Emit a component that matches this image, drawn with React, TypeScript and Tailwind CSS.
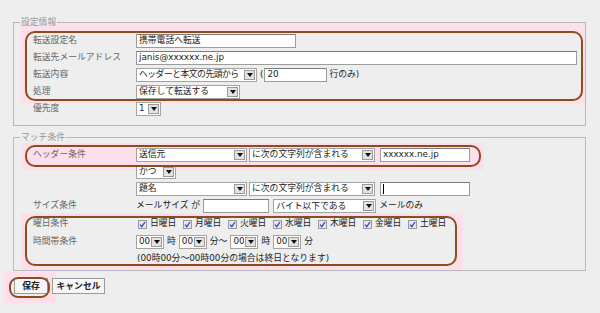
import type { ReactNode } from "react";

function Arrow() {
  return (
    <span className="m-[1px] flex w-[11px] shrink-0 items-center justify-center border border-[#9a9a9a] bg-[#e2e2e2]">
      <svg width="6" height="4" viewBox="0 0 6 4" aria-hidden>
        <polygon points="0,0 6,0 3,4" fill="#111" />
      </svg>
    </span>
  );
}

function Sel({ className, children }: { className: string; children: ReactNode }) {
  return (
    <div className={`flex h-[14px] items-stretch border border-[#a3a3a3] bg-white text-[#222] ${className}`}>
      <span className="flex flex-1 items-center overflow-hidden whitespace-nowrap pl-[2px] leading-none">{children}</span>
      <Arrow />
    </div>
  );
}

function Input({ className, children }: { className: string; children?: ReactNode }) {
  return (
    <div
      className={`flex h-[14px] items-center overflow-hidden whitespace-nowrap border border-[#9c9c9c] border-t-[#7a7a7a] bg-white pl-[2px] leading-none text-[#222] ${className}`}
    >
      {children}
    </div>
  );
}

function Row({ label, className = "h-[17px]", children }: { label?: string; className?: string; children: ReactNode }) {
  return (
    <div className={`flex items-center ${className}`}>
      <div className="w-[103px] shrink-0 whitespace-nowrap text-[#666]">{label}</div>
      <div className="flex items-center whitespace-nowrap">{children}</div>
    </div>
  );
}

function Check({ label }: { label: string }) {
  return (
    <div className="flex w-[45px] items-center">
      <span className="flex h-[9px] w-[9px] items-center justify-center border border-[#9a9a9a] bg-[#e6e6f0]">
        <svg width="7" height="7" viewBox="0 0 7 7" aria-hidden>
          <path d="M1 3.6 L2.8 5.6 L6 1" fill="none" stroke="#3346b8" strokeWidth="1.3" />
        </svg>
      </span>
      <span className="ml-[3px] text-[#222]">{label}</span>
    </div>
  );
}

export default function App() {
  const days = ["日曜日", "月曜日", "火曜日", "水曜日", "木曜日", "金曜日", "土曜日"];

  return (
    <div className="relative h-[313px] w-[600px] overflow-hidden bg-[#eeeeee] pt-[16px] font-['DejaVu_Sans','Noto_Sans_CJK_JP',sans-serif] text-[8.8px]">
      {/* pink highlight marks behind the form */}
      <div className="absolute left-[20px] top-[23px] h-[80px] w-[565px] bg-[#fcdfeb]" />
      <div className="absolute left-[27px] top-[33px] h-[66px] w-[554px] rounded-[8px] bg-[#eeeeee]" />
      <div className="absolute left-[22px] top-[143px] h-[27px] w-[462px] bg-[#fcdfeb]" />
      <div className="absolute left-[21px] top-[213px] h-[58px] w-[442px] bg-[#fcdfeb]" />
      <div className="absolute left-[27px] top-[218px] h-[46px] w-[428px] rounded-[8px] bg-[#eeeeee]" />
      <div className="absolute left-[4px] top-[272px] h-[31px] w-[52px] bg-[#fcdfeb]" />
      <div className="absolute left-[11px] top-[279px] h-[17px] w-[37px] rounded-[7px] bg-[#eeeeee]" />

      <div className="relative z-10">
        <fieldset className="ml-[13px] w-[573px] border border-[#b8b8b8]">
          <legend className="ml-[6px] px-[1px] leading-[12px] text-[#999]">設定情報</legend>
          <div className="pb-[8px] pl-[19px] pt-[4px]">
            <Row label="転送設定名">
              <Input className="w-[160px]">携帯電話へ転送</Input>
            </Row>
            <Row label="転送先メールアドレス">
              <Input className="w-[441px]">janis@xxxxxx.ne.jp</Input>
            </Row>
            <Row label="転送内容">
              <Sel className="w-[121px]">
                <span className="tracking-[-0.5px]">ヘッダーと本文の先頭から</span>
              </Sel>
              <span className="ml-[3px] mr-[1px] text-[#222]">(</span>
              <Input className="w-[63px]">20</Input>
              <span className="ml-[2px] text-[#222]">行のみ)</span>
            </Row>
            <Row label="処理">
              <Sel className="w-[104px]">保存して転送する</Sel>
            </Row>
            <Row label="優先度">
              <Sel className="w-[25px]">1</Sel>
            </Row>
          </div>
        </fieldset>

        <fieldset className="ml-[13px] mt-[5px] w-[573px] border border-[#b8b8b8]">
          <legend className="ml-[6px] px-[1px] leading-[12px] text-[#999]">マッチ条件</legend>
          <div className="pb-[3px] pl-[19px] pt-[3px]">
            <Row label="ヘッダー条件">
              <Sel className="w-[111px]">送信元</Sel>
              <Sel className="ml-[2px] w-[126px]">に次の文字列が含まれる</Sel>
              <Input className="ml-[5px] w-[90px]">xxxxxx.ne.jp</Input>
            </Row>
            <Row>
              <Sel className="w-[40px]">かつ</Sel>
            </Row>
            <Row>
              <Sel className="w-[111px]">題名</Sel>
              <Sel className="ml-[2px] w-[126px]">に次の文字列が含まれる</Sel>
              <Input className="ml-[5px] w-[90px]">
                <span className="h-[10px] w-px bg-black" />
              </Input>
            </Row>
            <Row label="サイズ条件" className="h-[18px]">
              <span className="text-[#222]">メールサイズ が</span>
              <Input className="ml-[3px] w-[66px]" />
              <Sel className="ml-[4px] w-[103px]">バイト以下である</Sel>
              <span className="ml-[3px] text-[#222]">メールのみ</span>
            </Row>
            <Row label="曜日条件" className="h-[18px]">
              <div className="ml-[2px] flex">
                {days.map((d) => (
                  <Check key={d} label={d} />
                ))}
              </div>
            </Row>
            <Row label="時間帯条件">
              <Sel className="w-[28px]">00</Sel>
              <span className="mx-[3px] text-[#222]">時</span>
              <Sel className="w-[28px]">00</Sel>
              <span className="mx-[3px] text-[#222]">分～</span>
              <Sel className="w-[28px]">00</Sel>
              <span className="mx-[3px] text-[#222]">時</span>
              <Sel className="w-[28px]">00</Sel>
              <span className="ml-[3px] text-[#222]">分</span>
            </Row>
            <Row>
              <span className="ml-[1px] text-[#222]">(00時00分～00時00分の場合は終日となります)</span>
            </Row>
          </div>
        </fieldset>

        <div className="ml-[14px] mt-[7px] flex gap-[4px]">
          <button type="button" className="h-[16px] w-[34px] border border-[#9a9a9a] bg-[#f6f6f6] font-bold leading-none text-[#222]">
            保存
          </button>
          <button type="button" className="h-[16px] w-[53px] border border-[#9a9a9a] bg-[#f6f6f6] font-bold leading-none text-[#222]">
            キャンセル
          </button>
        </div>
      </div>

      {/* brown ring marks */}
      <div className="pointer-events-none absolute left-[25px] top-[31px] z-20 h-[70px] w-[558px] rounded-[10px] border-2 border-[#8f4a1e]" />
      <div className="pointer-events-none absolute left-[25px] top-[145px] z-20 h-[22px] w-[456px] rounded-[10px] border-2 border-[#8f4a1e]" />
      <div className="pointer-events-none absolute left-[25px] top-[216px] z-20 h-[50px] w-[432px] rounded-[10px] border-2 border-[#8f4a1e]" />
      <div className="pointer-events-none absolute left-[9px] top-[277px] z-20 h-[21px] w-[41px] rounded-[9px] border-2 border-[#8f4a1e]" />
    </div>
  );
}
